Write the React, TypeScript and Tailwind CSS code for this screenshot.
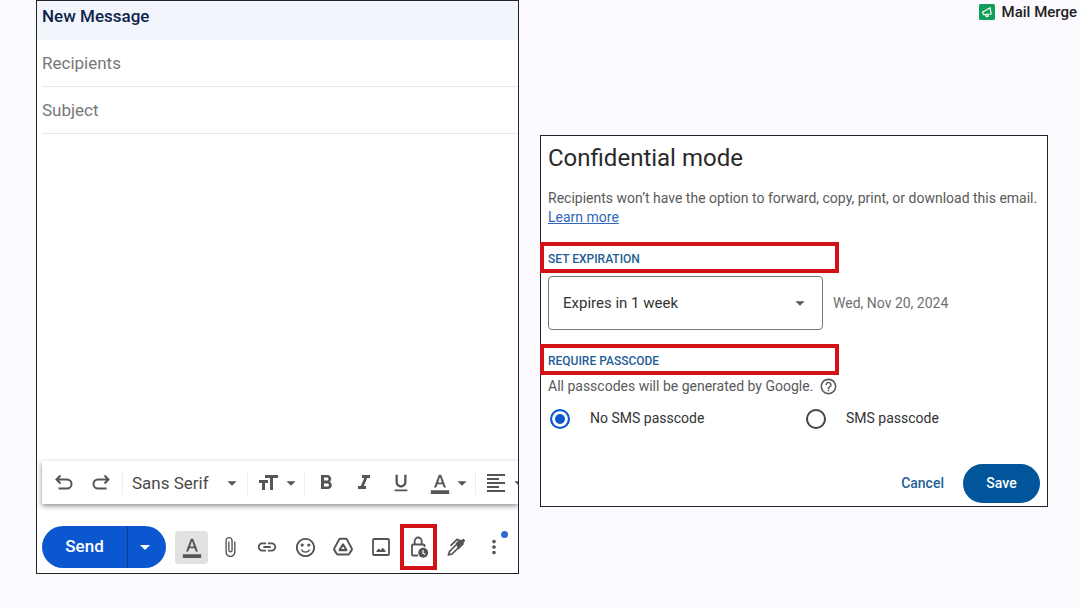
import type { ReactNode } from "react";
import {
  MdArrowDropDown,
  MdAttachFile,
  MdFormatAlignLeft,
  MdFormatBold,
  MdFormatColorText,
  MdFormatItalic,
  MdFormatSize,
  MdFormatUnderlined,
  MdHelpOutline,
  MdLink,
  MdMoreVert,
  MdSentimentSatisfiedAlt,
} from "react-icons/md";

function UndoIcon({ className = "" }: { className?: string }) {
  return (
    <svg
      viewBox="0 0 20 20"
      fill="none"
      stroke="currentColor"
      strokeWidth={2}
      className={`size-5 ${className}`}
    >
      <path d="M6.5 2.5 2.5 6.5l4 4M3 6.5h10a4.5 4.5 0 0 1 0 9H4.5" />
    </svg>
  );
}

function DriveIcon() {
  return (
    <svg
      viewBox="0 0 24 24"
      fill="none"
      stroke="currentColor"
      strokeWidth={2.2}
      strokeLinejoin="round"
      className="size-[22px]"
    >
      <path d="M9 3h6q.8 0 1.2.7l5.3 9.8q.5 1-.1 1.9l-2.5 4q-.5.8-1.4.8h-11q-.9 0-1.4-.8l-2.5-4q-.6-.9-.1-1.9l5.3-9.8Q8.200 3 9 3z" />
      <path d="M12 9 8.200 15.400h7.600z" />
    </svg>
  );
}

function ImageIcon() {
  return (
    <svg viewBox="0 0 20 20" className="size-5">
      <rect
        x="2"
        y="2"
        width="16"
        height="16"
        rx="1"
        fill="none"
        stroke="currentColor"
        strokeWidth={1.8}
      />
      <path d="M5.5 15v-1.200l2.200-2.200 1.800 1.600 2.200-2.400 2.800 3V15z" fill="currentColor" />
    </svg>
  );
}

function LockClockIcon() {
  return (
    <svg viewBox="0 0 20 24" fill="none" className="h-6 w-5">
      <path
        d="M9 20.500H4q-1 0-1-1V10.500q0-1 1-1h10.500q1 0 1 1V12M5.700 9V6a3.500 3.500 0 0 1 7 0v3"
        stroke="currentColor"
        strokeWidth={1.8}
      />
      <circle cx="14.200" cy="17.800" r="5" fill="currentColor" />
      <path d="M14 15v3.200l2.200 1.400" stroke="white" strokeWidth={1.2} />
    </svg>
  );
}

function PenIcon() {
  return (
    <svg viewBox="0 0 20 20" fill="none" className="size-5">
      <path
        d="M11 7 3.500 14.500 2.600 17.800 6 17 13.500 9.500z"
        stroke="currentColor"
        strokeWidth={1.7}
      />
      <path
        d="M9.500 6.500 13.800 2.200l1.700 1 1-1q1-.8 2 .2t.2 2l-1.200 1.300.5 1.200L12.500 12.400z"
        fill="currentColor"
      />
      <path d="M4.500 8.800 10.500 2.800q.7-.6 1.400 0l1.400 1.400" stroke="currentColor" strokeWidth={1.8} />
    </svg>
  );
}

function MegaphoneLogo() {
  return (
    <svg viewBox="0 0 16 16" fill="none" className="size-4">
      <rect width="16" height="16" rx="1.500" fill="#0f9f58" />
      <path
        d="M3.400 8.200 11 3.800l1.200 6.200-7.600.6zM6.500 10.600l.8 2 2-.4-.4-1.800"
        stroke="white"
        strokeWidth={1.2}
        strokeLinejoin="round"
      />
    </svg>
  );
}

function ToolButton({
  label,
  className = "w-[37px]",
  children,
}: {
  label: string;
  className?: string;
  children: ReactNode;
}) {
  return (
    <button
      type="button"
      aria-label={label}
      className={`flex shrink-0 items-center justify-center ${className}`}
    >
      {children}
    </button>
  );
}

function Divider() {
  return <span className="h-6 w-px shrink-0 bg-[#ececec]" />;
}

function FormatBar() {
  return (
    <div className="overflow-hidden pt-3 pb-3 pl-[5px]">
      <div className="flex h-[43px] items-center bg-white pl-[3px] text-[#555] shadow-[0_2px_5px_rgba(0,0,0,0.45)]">
        <ToolButton label="Undo">
          <UndoIcon />
        </ToolButton>
        <ToolButton label="Redo" className="mr-[3px] w-[37px]">
          <UndoIcon className="-scale-x-100" />
        </ToolButton>
        <Divider />
        <div className="relative flex w-[124px] shrink-0 items-center">
          <select
            aria-label="Font"
            className="w-full appearance-none bg-transparent pl-[9px] text-[17px] leading-6 text-[#4a4a4a]"
          >
            <option>Sans Serif</option>
          </select>
          <MdArrowDropDown className="pointer-events-none absolute right-[4px] size-[22px]" />
        </div>
        <Divider />
        <ToolButton label="Size" className="w-[56px] pl-[6px]">
          <MdFormatSize className="size-6 shrink-0" />
          <MdArrowDropDown className="size-[22px] shrink-0" />
        </ToolButton>
        <Divider />
        <ToolButton label="Bold" className="ml-[2px] w-[38px]">
          <MdFormatBold className="size-6" />
        </ToolButton>
        <ToolButton label="Italic">
          <MdFormatItalic className="size-6" />
        </ToolButton>
        <ToolButton label="Underline">
          <MdFormatUnderlined className="size-[22px]" />
        </ToolButton>
        <ToolButton label="Text color" className="w-[56px] pl-2">
          <MdFormatColorText className="size-[22px] shrink-0" />
          <MdArrowDropDown className="size-[22px] shrink-0" />
        </ToolButton>
        <Divider />
        <ToolButton label="Align" className="w-[56px] pl-[6px]">
          <MdFormatAlignLeft className="size-6 shrink-0" />
          <MdArrowDropDown className="size-[22px] shrink-0" />
        </ToolButton>
      </div>
    </div>
  );
}

function ComposeWindow() {
  return (
    <form
      onSubmit={(e) => e.preventDefault()}
      className="flex min-w-0 flex-col overflow-hidden border border-[#222] bg-white"
    >
      <h1 className="h-[39px] bg-[#f2f5fc] pl-[5px] text-[17px] leading-[30px] font-medium text-[#0f1f4b]">
        New Message
      </h1>
      <input
        aria-label="Recipients"
        placeholder="Recipients"
        className="ml-[5px] h-[47px] border-b border-[#e8e8e8] text-[17px] placeholder:text-[#777]"
      />
      <input
        aria-label="Subject"
        placeholder="Subject"
        className="ml-[5px] h-[47px] border-b border-[#e8e8e8] text-[17px] placeholder:text-[#777]"
      />
      <textarea
        aria-label="Message body"
        className="ml-[5px] h-[315px] resize-none p-2 text-[17px] outline-none"
      />
      <FormatBar />
      <div className="mt-2 mb-[3px] flex h-[46px] items-center pr-[5px] pl-[5px] text-[#555]">
        <div className="flex h-[42px] w-[124px] shrink-0 overflow-hidden rounded-full bg-[#0b57d0] text-white">
          <button type="submit" className="w-[85px] text-[17px] font-medium">
            Send
          </button>
          <button
            type="button"
            aria-label="More send options"
            className="flex flex-1 items-center border-l border-[#0a3c96] pl-[5px]"
          >
            <MdArrowDropDown className="size-6" />
          </button>
        </div>
        <div className="ml-[7px] grid flex-1 grid-cols-9 place-items-center">
          <ToolButton label="Formatting options" className="size-[33px] rounded bg-[#e1e1e1]">
            <MdFormatColorText className="size-[22px]" />
          </ToolButton>
          <ToolButton label="Attach files">
            <MdAttachFile className="size-[22px]" />
          </ToolButton>
          <ToolButton label="Insert link">
            <MdLink className="size-[22px]" />
          </ToolButton>
          <ToolButton label="Insert emoji">
            <MdSentimentSatisfiedAlt className="size-[23px]" />
          </ToolButton>
          <ToolButton label="Insert files using Drive">
            <DriveIcon />
          </ToolButton>
          <ToolButton label="Insert photo">
            <ImageIcon />
          </ToolButton>
          <ToolButton
            label="Toggle confidential mode"
            className="h-[46px] w-[37px] border-4 border-[#d31217]"
          >
            <LockClockIcon />
          </ToolButton>
          <ToolButton label="Insert signature">
            <PenIcon />
          </ToolButton>
          <ToolButton label="More options" className="relative h-8 w-[37px]">
            <MdMoreVert className="size-[22px]" />
            <span className="absolute top-0 right-[5px] size-[7px] rounded-full bg-[#2b6bd0]" />
          </ToolButton>
        </div>
      </div>
    </form>
  );
}

function SectionTitle({ children }: { children: ReactNode }) {
  return (
    <h3 className="flex h-[31px] w-[299px] max-w-full items-center border-4 border-[#d31217] pt-[2px] pl-1 text-[12px] font-medium text-[#1f6097]">
      {children}
    </h3>
  );
}

function PasscodeOption({
  label,
  defaultChecked,
}: {
  label: string;
  defaultChecked?: boolean;
}) {
  return (
    <label className="flex items-center gap-5 text-[14px] text-[#333]">
      <input
        type="radio"
        name="passcode"
        defaultChecked={defaultChecked}
        className="size-5 appearance-none rounded-full border-2 border-[#444] bg-white checked:border-[#0b57d0] checked:bg-[#0b57d0] checked:shadow-[inset_0_0_0_3px_white]"
      />
      {label}
    </label>
  );
}

function ConfidentialDialog() {
  return (
    <form
      onSubmit={(e) => e.preventDefault()}
      className="border border-[#222] bg-white text-[14px] text-[#5a5a5a]"
    >
      <h2 className="pt-[6px] pl-[7px] text-[24px] leading-8 text-[#2a2a2a]">Confidential mode</h2>
      <p className="mt-[15px] pl-[7px] leading-[19px]">
        Recipients won’t have the option to forward, copy, print, or download this email.{" "}
        <br />
        <a href="#" className="text-[#2f66b8] underline">
          Learn more
        </a>
      </p>
      <div className="-ml-px mt-[15px]">
        <SectionTitle>SET EXPIRATION</SectionTitle>
      </div>
      <div className="mt-[3px] flex items-center gap-[10px] pl-[7px]">
        <div className="relative flex w-[275px] items-center">
          <select
            aria-label="Expiration"
            className="h-[54px] w-full appearance-none rounded border border-[#777] bg-white pl-[14px] text-[15px] text-[#333]"
          >
            <option>Expires in 1 week</option>
          </select>
          <MdArrowDropDown className="pointer-events-none absolute right-[12px] size-[22px]" />
        </div>
        <span className="text-[#707070]">Wed, Nov 20, 2024</span>
      </div>
      <div className="-ml-px mt-[14px]">
        <SectionTitle>REQUIRE PASSCODE</SectionTitle>
      </div>
      <p className="flex h-[22px] items-center gap-[6px] pl-[7px]">
        All passcodes will be generated by Google.
        <MdHelpOutline className="size-[19px]" />
      </p>
      <div className="mt-[11px] grid grid-cols-[256px_1fr] pl-[9px]">
        <PasscodeOption label="No SMS passcode" defaultChecked />
        <PasscodeOption label="SMS passcode" />
      </div>
      <div className="mt-[35px] mb-[3px] flex justify-end gap-[19px] pr-[7px] font-medium">
        <button type="button" className="text-[#1f6097]">
          Cancel
        </button>
        <button type="submit" className="h-[39px] w-[77px] rounded-full bg-[#00559b] text-white">
          Save
        </button>
      </div>
    </form>
  );
}

export default function App() {
  return (
    <main className="grid min-h-screen grid-cols-[483fr_540fr] items-start gap-[21px] bg-[#fcfaff] pl-9 font-[Roboto,'Liberation_Sans',sans-serif]">
      <ComposeWindow />
      <div className="flex flex-col">
        <header className="flex h-6 items-center justify-end gap-[7px] pr-[3px] text-[15px] font-medium text-[#222]">
          <MegaphoneLogo />
          Mail Merge
        </header>
        <div className="mt-[111px] mr-8">
          <ConfidentialDialog />
        </div>
      </div>
    </main>
  );
}
